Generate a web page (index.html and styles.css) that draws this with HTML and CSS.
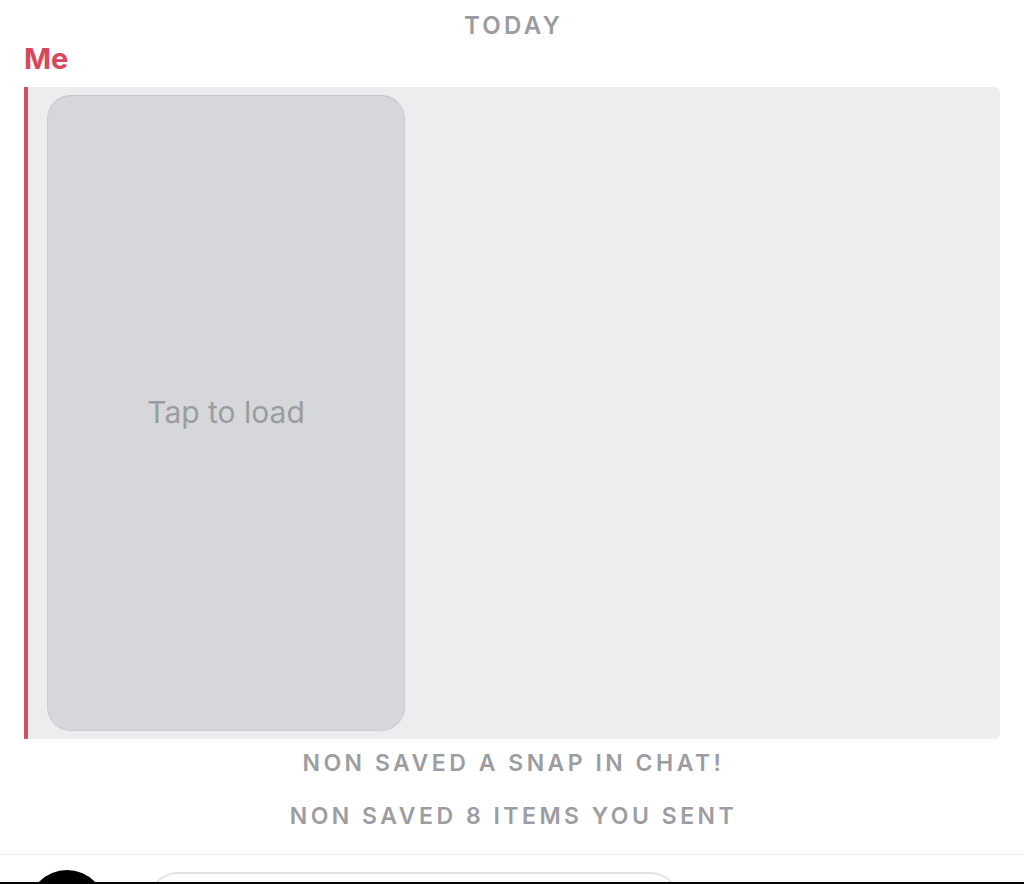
FILE: index.html
```html
<!DOCTYPE html>
<html>
<head>
<meta charset="utf-8">
<link rel="stylesheet" href="styles.css">
</head>
<body>
<div class="screen">
  <div class="day">TODAY</div>
  <div class="sender">Me</div>
  <div class="card">
    <div class="tile"><span>Tap to load</span></div>
  </div>
  <div class="status first">NON SAVED A SNAP IN CHAT!</div>
  <div class="status second">NON SAVED 8 ITEMS YOU SENT</div>
  <div class="composer">
    <div class="avatar"></div>
    <div class="input"></div>
  </div>
  <div class="edge"></div>
</div>
</body>
</html>
```
FILE: styles.css
```css
html, body {
  margin: 0;
  padding: 0;
  background: #ffffff;
}
.screen {
  width: 1024px;
  height: 884px;
  overflow: hidden;
  display: flex;
  flex-direction: column;
  font-family: "Inter", "Lato", sans-serif;
  position: relative;
}
.day {
  margin-top: 12px;
  height: 28px;
  line-height: 28px;
  text-align: center;
  font-size: 24px;
  font-weight: 600;
  letter-spacing: 3.3px;
  padding-left: 3px;
  color: #9a9ca2;
}
.sender {
  margin: 1px 0 0 24px;
  height: 36px;
  line-height: 36px;
  font-size: 29px;
  font-weight: 700;
  color: #d9485a;
}
.card {
  margin: 10px 24px 0 24px;
  height: 652px;
  box-sizing: border-box;
  background: #ecedef;
  border-left: 4px solid #d4505f;
  border-radius: 0 6px 6px 0;
  padding: 8px 0 8px 19px;
  display: flex;
}
.tile {
  width: 358px;
  height: 636px;
  box-sizing: border-box;
  background: #d6d7da;
  border: 1px solid #cbccd0;
  border-top-color: #c4c5c9;
  border-radius: 24px;
  display: flex;
  align-items: center;
  justify-content: center;
}
.tile span {
  font-size: 30px;
  color: #9b9ca0;
  font-weight: 400;
  margin-top: -2px;
}
.status {
  text-align: center;
  font-size: 23px;
  font-weight: 600;
  letter-spacing: 3.5px;
  padding-left: 3px;
  color: #9c9da2;
  height: 28px;
  line-height: 28px;
}
.status.first {
  margin-top: 10px;
}
.status.second {
  margin-top: 25px;
}
.composer {
  margin-top: 24px;
  border-top: 1px solid #ececec;
  display: flex;
  align-items: flex-start;
  padding-left: 28px;
  gap: 42px;
  flex: 1;
}
.avatar {
  margin-top: 15px;
  width: 78px;
  height: 78px;
  border-radius: 50%;
  background: #000;
  flex: none;
}
.input {
  margin-top: 17px;
  width: 532px;
  height: 60px;
  box-sizing: border-box;
  border: 2px solid #e2e2e2;
  border-radius: 30px;
  flex: none;
}
.edge {
  position: absolute;
  left: 0;
  right: 0;
  bottom: 0;
  height: 2px;
  background: #000;
}
```
